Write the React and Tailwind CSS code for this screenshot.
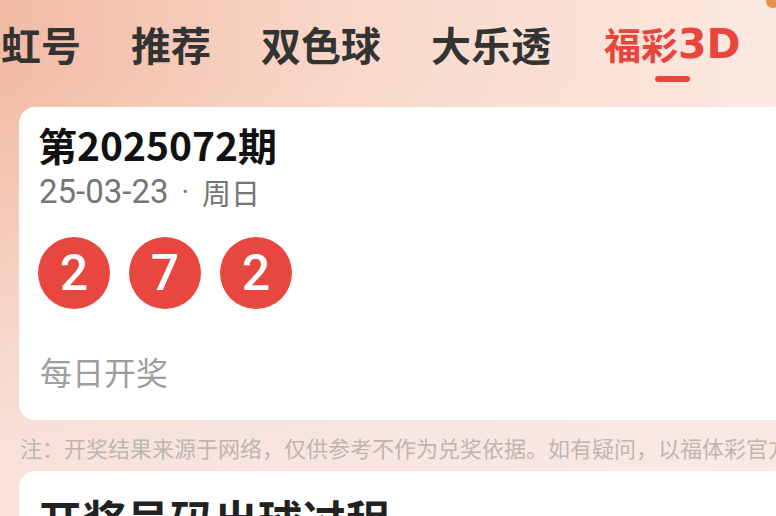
export default function App() {
  const tabs = ["彩虹号", "推荐", "双色球", "大乐透"];
  return (
    <div className="relative w-[776px] h-[516px] overflow-hidden font-['Noto_Sans_CJK_SC','Roboto',sans-serif] bg-[linear-gradient(180deg,rgba(249,232,227,0)_15%,rgba(249,232,227,0.85)_85%),linear-gradient(90deg,#f2bba4_0%,#f8d8ca_45%,#fce9e0_100%)]">
      <div className="absolute right-[-4px] top-[-6px] w-[14px] h-[14px] rounded-full bg-[#e88f4c]" />
      <div className="h-[107px] pt-[24px] flex items-start gap-[50px] ml-[-39px] whitespace-nowrap">
        {tabs.map((t) => (
          <div key={t} className="text-[40px] leading-[40px] font-bold text-[#333333]">{t}</div>
        ))}
        <div className="flex flex-col items-center ml-[3px]">
          <div className="h-[40px] flex items-center font-bold text-[#e8453c]">
            <span className="text-[37px] leading-[40px]">福彩</span>
            <span className="text-[41px] leading-[40px] font-['DejaVu_Sans',sans-serif]">3D</span>
          </div>
          <div className="mt-[12px] w-[35px] h-[6px] rounded-full bg-[#e8453c]" />
        </div>
      </div>

      <div className="ml-[19px] w-[800px] h-[313px] rounded-[16px] bg-white pl-[19px] pt-[14px]">
        <div className="text-[39px] leading-[47px] font-bold text-[#111111]">第2025072期</div>
        <div className="mt-[6px] h-[36px] flex items-center text-[#757575] whitespace-nowrap">
          <span className="ml-[1px] text-[33px] leading-[36px] font-['Roboto',sans-serif]">25-03-23</span>
          <span className="px-[13px] text-[29px] leading-[36px] font-['Roboto',sans-serif]">·</span>
          <span className="text-[29px] leading-[36px]">周日</span>
        </div>
        <div className="mt-[27px] flex gap-[19px]">
          {["2", "7", "2"].map((n, i) => (
            <div key={i} className="w-[72px] h-[72px] rounded-full bg-[#e8473f] flex items-center justify-center text-white text-[50px] leading-none font-medium font-['Roboto',sans-serif]">{n}</div>
          ))}
        </div>
        <div className="mt-[42px] ml-[2px] text-[32px] leading-[40px] text-[#9e9e9e]">每日开奖</div>
      </div>

      <div className="mt-[13px] ml-[20px] text-[22px] leading-[28px] text-[#bdb6b3] whitespace-nowrap">注：开奖结果来源于网络，仅供参考不作为兑奖依据。如有疑问，以福体彩官方公布为准。</div>

      <div className="mt-[10px] ml-[19px] w-[800px] h-[200px] rounded-[16px] bg-white pl-[19px] pt-[22px]">
        <div className="text-[44px] leading-[52px] font-bold text-[#222222]">开奖号码出球过程</div>
      </div>
    </div>
  );
}
